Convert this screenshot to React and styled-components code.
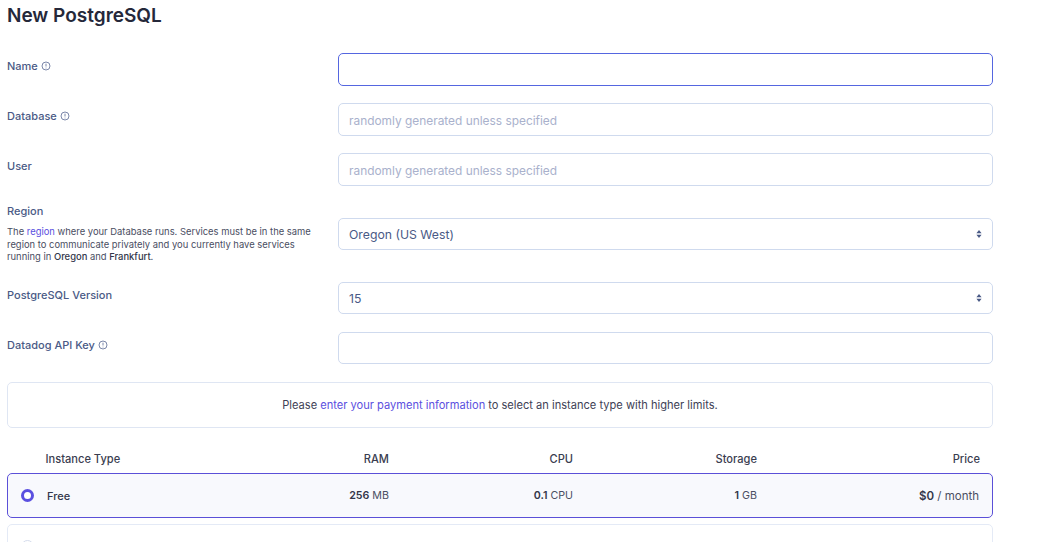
import React from "react";
import styled, { createGlobalStyle } from "styled-components";

const Global = createGlobalStyle`
  html, body { margin: 0; padding: 0; background: #fff; height: 542px; overflow: hidden; }
  body { font-family: Inter, "Liberation Sans", sans-serif; color: #2b2d42; }
  * { box-sizing: border-box; }
`;
const Page = styled.main`
  width: 986px; margin-left: 7px; height: 542px; overflow: hidden;
  display: flex; flex-direction: column;
`;
const Title = styled.h1`
  margin: 5px 0 0; font-size: 19px; line-height: 22px; font-weight: 600; color: #25283a;
`;
const Form = styled.form`
  display: flex; flex-direction: column; margin-top: 26px;
`;
const Row = styled.div`
  display: grid; grid-template-columns: 331px 655px;
  margin-bottom: ${p => p.$gap}px;
`;
const LabelCol = styled.div`
  padding-top: ${p => p.$top ?? 6}px; min-width: 0;
`;
const Label = styled.label`
  display: flex; align-items: center; gap: 3.5px;
  font-size: 11px; line-height: 14px; font-weight: 500; color: #4a5a86;
`;
const Help = styled.p`
  margin: 8px 0 0; width: 312px; font-size: 9.42px; line-height: 12.67px; color: #4a4e62;
  a { color: #5b50e0; text-decoration: none; }
  b { font-weight: 500; color: #33364a; }
`;
const Input = styled.input`
  display: block; width: 655px; height: ${p => p.$h ?? 33}px; padding: 1px 10px 0;
  border: 1px solid ${p => p.$focus ? "#5566e0" : "#cfdaee"}; border-radius: 5px;
  background: #fff; font: 400 11.9px Inter, sans-serif; outline: none;
  &::placeholder { color: #a9b1cc; opacity: 1; }
`;
const SelectWrap = styled.div`
  position: relative; width: 655px; height: 32px; margin-top: ${p => p.$top ?? 0}px;
`;
const Select = styled.select`
  appearance: none; display: block; width: 100%; height: 100%; padding: 0 10px;
  border: 1px solid #cfdaee; border-radius: 5px; background: #fff;
  font: 400 12.25px Inter, sans-serif; color: #4a5a86; outline: none;
`;
const Caret = styled.svg`
  position: absolute; right: 11px; top: 12px; width: 6px; height: 8px; pointer-events: none;
`;
const Banner = styled.div`
  height: 46px; border: 1px solid #dfe6f3; border-radius: 5px;
  display: flex; align-items: center; justify-content: center;
  font-size: 11.1px; color: #3e4155; margin-bottom: 24px;
  a { color: #5b50e0; text-decoration: none; margin: 0 3px; }
`;
const Head = styled.div`
  display: grid; align-items: center;
  padding: 0 13px 0 38.5px;
  grid-template-columns: 1fr 80px 184px 184px 223px;
  height: 14px; font-size: 11.1px; font-weight: 500; color: #3a3d50;
  margin-bottom: 7px;
  span + span { text-align: right; }
`;
const Card = styled.div`
  display: grid; align-items: center;
  grid-template-columns: 26px 1fr 80px 184px 184px 222px;
  padding: 0 13px;
  height: 45px; flex: none;
  border: 1px solid ${p => p.$active ? "#5b50d8" : "#e4eaf6"}; border-radius: 5px;
  background: ${p => p.$active ? "#f8f9fd" : "#fff"};
  margin-bottom: 6px;
  font-size: 10.5px; color: #4a4e62;
  b { font-weight: 600; color: #33364a; }
`;
const Radio = styled.span`
  width: 13px; height: 13px; border-radius: 50%;
  border: ${p => p.$on ? "3.5px solid #5b50e0" : "1px solid #d5dcec"}; background: #fff;
`;
const Name = styled.span`
  font-size: 11px; font-weight: 500; color: #33364a;
`;
const Cell = styled.span`
  text-align: right;
  font-size: ${p => p.$size ?? 10.7}px;
`;
const Info = () => (
  <svg width="10" height="10" viewBox="0 0 10 10" fill="none" stroke="#5a6a94" strokeWidth=".8">
    <circle cx="5" cy="5" r="4" />
    <path d="M5 2.7v2.8M5 6.7v.7" />
  </svg>
);
const Arrows = () => (
  <Caret viewBox="0 0 6 8">
    <path d="M3 0 5.6 3.2H.4zM3 8 .4 4.8h5.2z" fill="#4a5a86" />
  </Caret>
);

export default function App() {
  return (
    <>
      <Global />
      <Page>
        <Title>New PostgreSQL</Title>
        <Form>
          <Row $gap={17}>
            <LabelCol><Label>Name <Info /></Label></LabelCol>
            <Input $focus />
          </Row>
          <Row $gap={17}>
            <LabelCol><Label>Database <Info /></Label></LabelCol>
            <Input placeholder="randomly generated unless specified" />
          </Row>
          <Row $gap={17}>
            <LabelCol><Label>User</Label></LabelCol>
            <Input placeholder="randomly generated unless specified" />
          </Row>
          <Row $gap={18}>
            <LabelCol $top={1}>
              <Label>Region</Label>
              <Help>The <a href="#r">region</a> where your Database runs. Services must be in the same region to communicate privately and you currently have services running in <b>Oregon</b> and <b>Frankfurt</b>.</Help>
            </LabelCol>
            <SelectWrap $top={15}>
              <Select defaultValue="o"><option value="o">Oregon (US West)</option></Select>
              <Arrows />
            </SelectWrap>
          </Row>
          <Row $gap={18}>
            <LabelCol><Label>PostgreSQL Version</Label></LabelCol>
            <SelectWrap>
              <Select defaultValue="15"><option value="15">15</option></Select>
              <Arrows />
            </SelectWrap>
          </Row>
          <Row $gap={18}>
            <LabelCol><Label>Datadog API Key <Info /></Label></LabelCol>
            <Input $h={32} />
          </Row>
          <Banner>Please<a href="#p">enter your payment information</a>to select an instance type with higher limits.</Banner>
          <Head>
            <span>Instance Type</span><span>RAM</span><span>CPU</span><span>Storage</span><span>Price</span>
          </Head>
          <Card $active>
            <Radio $on />
            <Name>Free</Name>
            <Cell><b>256</b> MB</Cell>
            <Cell><b>0.1</b> CPU</Cell>
            <Cell><b>1</b> GB</Cell>
            <Cell $size={11.5}><b>$0</b> / month</Cell>
          </Card>
          <Card><Radio /></Card>
        </Form>
      </Page>
    </>
  );
}
